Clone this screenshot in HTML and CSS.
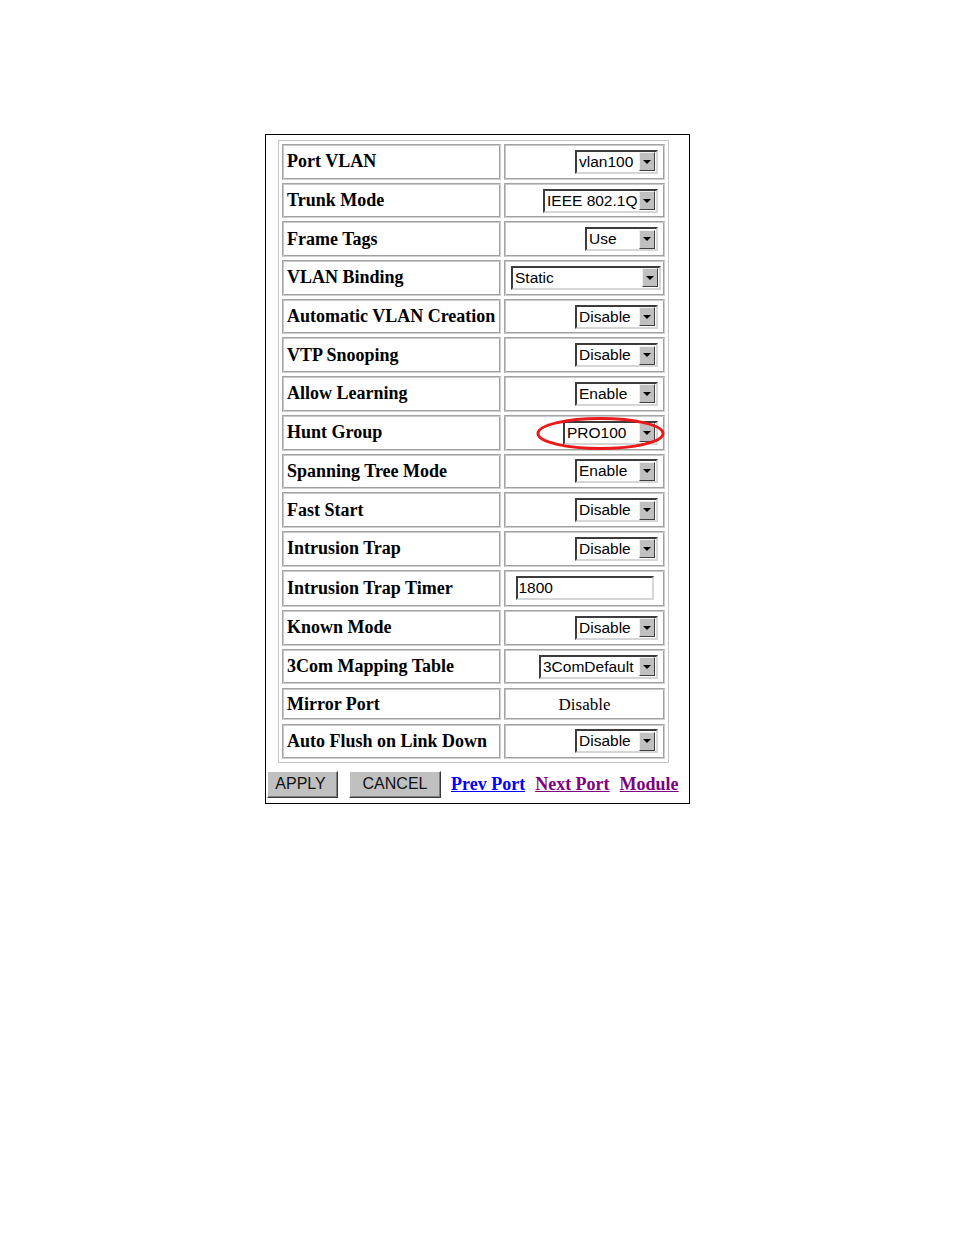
FILE: index.html
```html
<!DOCTYPE html>
<html>
<head>
<meta charset="utf-8">
<title>Port Setup</title>
<link rel="stylesheet" href="styles.css">
</head>
<body>
<div class="frame">
  <div class="table">
    <div class="cell label">Port VLAN</div>
    <div class="cell value"><div class="sel w83"><span class="sel-text">vlan100</span><span class="sel-btn"><i class="tri"></i></span></div></div>

    <div class="cell label">Trunk Mode</div>
    <div class="cell value"><div class="sel w115"><span class="sel-text">IEEE 802.1Q</span><span class="sel-btn"><i class="tri"></i></span></div></div>

    <div class="cell label">Frame Tags</div>
    <div class="cell value"><div class="sel w73"><span class="sel-text">Use</span><span class="sel-btn"><i class="tri"></i></span></div></div>

    <div class="cell label">VLAN Binding</div>
    <div class="cell value"><div class="sel w150 wide"><span class="sel-text">Static</span><span class="sel-btn"><i class="tri"></i></span></div></div>

    <div class="cell label">Automatic VLAN Creation</div>
    <div class="cell value"><div class="sel w83"><span class="sel-text">Disable</span><span class="sel-btn"><i class="tri"></i></span></div></div>

    <div class="cell label">VTP Snooping</div>
    <div class="cell value"><div class="sel w83"><span class="sel-text">Disable</span><span class="sel-btn"><i class="tri"></i></span></div></div>

    <div class="cell label">Allow Learning</div>
    <div class="cell value"><div class="sel w83"><span class="sel-text">Enable</span><span class="sel-btn"><i class="tri"></i></span></div></div>

    <div class="cell label">Hunt Group</div>
    <div class="cell value marked">
      <div class="sel w95"><span class="sel-text">PRO100</span><span class="sel-btn"><i class="tri"></i></span></div>
      <svg class="ring" width="131" height="35" viewBox="0 0 131 35"><ellipse cx="65.5" cy="17.5" rx="62.5" ry="15" fill="none" stroke="#ea1a1a" stroke-width="3"/></svg>
    </div>

    <div class="cell label">Spanning Tree Mode</div>
    <div class="cell value"><div class="sel w83"><span class="sel-text">Enable</span><span class="sel-btn"><i class="tri"></i></span></div></div>

    <div class="cell label">Fast Start</div>
    <div class="cell value"><div class="sel w83"><span class="sel-text">Disable</span><span class="sel-btn"><i class="tri"></i></span></div></div>

    <div class="cell label">Intrusion Trap</div>
    <div class="cell value"><div class="sel w83"><span class="sel-text">Disable</span><span class="sel-btn"><i class="tri"></i></span></div></div>

    <div class="cell label tall">Intrusion Trap Timer</div>
    <div class="cell value tall center"><div class="textbox">1800</div></div>

    <div class="cell label">Known Mode</div>
    <div class="cell value"><div class="sel w83"><span class="sel-text">Disable</span><span class="sel-btn"><i class="tri"></i></span></div></div>

    <div class="cell label">3Com Mapping Table</div>
    <div class="cell value"><div class="sel w119"><span class="sel-text">3ComDefault</span><span class="sel-btn"><i class="tri"></i></span></div></div>

    <div class="cell label short">Mirror Port</div>
    <div class="cell value short center plain">Disable</div>

    <div class="cell label last">Auto Flush on Link Down</div>
    <div class="cell value last"><div class="sel w83"><span class="sel-text">Disable</span><span class="sel-btn"><i class="tri"></i></span></div></div>
  </div>

  <div class="actions">
    <button class="btn apply">APPLY</button>
    <button class="btn cancel">CANCEL</button>
    <a class="link prev" href="#">Prev Port</a>
    <a class="link visited" href="#">Next Port</a>
    <a class="link visited end" href="#">Module</a>
  </div>
</div>
</body>
</html>
```

FILE: styles.css
```css
html, body {
  margin: 0;
  padding: 0;
  background: #ffffff;
}

.frame {
  box-sizing: border-box;
  width: 425px;
  height: 670px;
  margin: 134px 0 0 265px;
  border: 1px solid #000000;
  padding: 5px 0 0 0;
}

.table {
  display: grid;
  grid-template-columns: 219px 161px;
  column-gap: 3px;
  row-gap: 3px;
  padding: 3px;
  margin-left: 12px;
  width: max-content;
  border: 1px solid #c4c4c4;
}

.cell {
  box-sizing: border-box;
  height: 35.7px;
  display: flex;
  align-items: center;
  border: 1px solid;
  border-color: #a4a4a4 #d0d0d0 #d0d0d0 #a4a4a4;
  box-shadow: inset 1px 1px 0 #c8c8c8, inset -1px -1px 0 #a0a0a0;
}

.cell.tall { height: 37.5px; }
.cell.short { height: 31.5px; margin-top: 1px; }
.cell.last { height: 35px; margin-top: 1px; }

.label {
  padding-left: 4px;
  font-family: "Liberation Serif", "Times New Roman", serif;
  font-weight: bold;
  font-size: 18px;
  color: #000;
  white-space: nowrap;
}

.value {
  justify-content: flex-end;
  padding-right: 6px;
}

.value.center {
  justify-content: center;
  padding-right: 0;
}

.value.plain {
  font-family: "Liberation Serif", "Times New Roman", serif;
  font-size: 17px;
  color: #000;
  padding-top: 2px;
}

.marked {
  position: relative;
}

.ring {
  position: absolute;
  left: 30px;
  top: 0px;
  overflow: visible;
}

.sel {
  box-sizing: border-box;
  height: 24px;
  display: flex;
  align-items: center;
  background: #ffffff;
  border: 2px solid;
  border-color: #3c3c3c #d6d6d6 #d6d6d6 #3c3c3c;
  font-family: "Liberation Sans", Arial, sans-serif;
  font-size: 15.5px;
  color: #000;
}

.w73 { width: 73px; }
.w83 { width: 83px; }
.w95 { width: 95px; }
.w115 { width: 115px; }
.w119 { width: 119px; }
.w150 { width: 150px; }
.sel.wide { margin-right: -3px; }

.sel-text {
  flex: 1;
  padding-left: 2px;
  white-space: nowrap;
  overflow: hidden;
  line-height: 20px;
}

.sel-btn {
  box-sizing: border-box;
  width: 16px;
  height: 19px;
  margin-right: 1px;
  background: #c0c0c0;
  border: 1px solid;
  border-color: #f0f0f0 #404040 #404040 #f0f0f0;
  display: flex;
  align-items: center;
  justify-content: center;
  flex-shrink: 0;
}

.tri {
  width: 0;
  height: 0;
  border-left: 4px solid transparent;
  border-right: 4px solid transparent;
  border-top: 4px solid #000000;
}

.textbox {
  box-sizing: border-box;
  width: 138px;
  height: 24px;
  border: 2px solid;
  border-color: #3c3c3c #d6d6d6 #d6d6d6 #3c3c3c;
  padding-left: 1px;
  font-family: "Liberation Sans", Arial, sans-serif;
  font-size: 15.5px;
  line-height: 20px;
  color: #000;
  background: #fff;
}

.actions {
  display: flex;
  align-items: center;
  margin-top: 8px;
  padding-left: 1px;
  white-space: nowrap;
}

.btn {
  box-sizing: border-box;
  flex-shrink: 0;
  height: 27px;
  padding: 0;
  background: #c0c0c0;
  border: 1px solid;
  border-color: #ffffff #3a3a3a #3a3a3a #ffffff;
  box-shadow: inset -1px -1px 0 #808080;
  font-family: "Liberation Sans", Arial, sans-serif;
  font-size: 16px;
  color: #111;
  text-align: center;
}

.btn.apply {
  width: 71px;
  margin-right: 11px;
  padding-right: 4px;
}

.btn.cancel {
  width: 92px;
  margin-right: 10px;
}

.link {
  flex-shrink: 0;
  font-family: "Liberation Serif", "Times New Roman", serif;
  font-weight: bold;
  font-size: 18px;
  text-decoration: underline;
  margin-right: 10px;
}

.link.end { margin-right: 0; }
.link.prev { color: #0000ff; }
.link.visited { color: #800080; }
```
